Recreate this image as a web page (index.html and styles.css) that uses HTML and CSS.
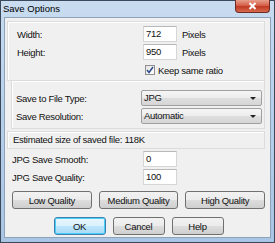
FILE: index.html
```html
<!DOCTYPE html>
<html lang="en">
<head>
  <meta charset="UTF-8" />
  <title>Save Options</title>
  <link rel="stylesheet" href="styles.css">
</head>
<body>
  <div class="window">
    <div class="titlebar">
      <span class="title">Save Options</span>
      <div class="close">
        <svg width="9" height="8" viewBox="0 0 9 8"><path d="M1.5 1 L7.5 7 M7.5 1 L1.5 7" stroke="#fff" stroke-width="2"/></svg>
      </div>
    </div>
    <div class="client">
      <div class="group size">
        <div class="row">
          <span class="label">Width:</span>
          <div class="field">712</div>
          <span class="unit">Pixels</span>
        </div>
        <div class="row">
          <span class="label">Height:</span>
          <div class="field">950</div>
          <span class="unit">Pixels</span>
        </div>
        <div class="row check-row">
          <span class="checkbox">
            <svg width="8" height="8" viewBox="0 0 8 8"><path d="M1 4 L3 6.5 L7 1" fill="none" stroke="#2c4a8a" stroke-width="1.5"/></svg>
          </span>
          <span>Keep same ratio</span>
        </div>
      </div>
      <div class="group types">
        <div class="row">
          <span class="label">Save to File Type:</span>
          <div class="select">JPG<span class="arrow"></span></div>
        </div>
        <div class="row">
          <span class="label">Save Resolution:</span>
          <div class="select">Automatic<span class="arrow"></span></div>
        </div>
      </div>
      <div class="group estimate">Estimated size of saved file: 118K</div>
      <div class="group jpg">
        <div class="row">
          <span class="label">JPG Save Smooth:</span>
          <div class="field">0</div>
        </div>
        <div class="row">
          <span class="label">JPG Save Quality:</span>
          <div class="field">100</div>
        </div>
        <div class="presets">
          <button class="btn preset">Low Quality</button>
          <button class="btn preset">Medium Quality</button>
          <button class="btn preset">High Quality</button>
        </div>
        <div class="actions">
          <button class="btn action default">OK</button>
          <button class="btn action">Cancel</button>
          <button class="btn action">Help</button>
        </div>
      </div>
    </div>
  </div>
</body>
</html>
```

FILE: styles.css
```css
body {
  margin: 0;
  font-family: "Liberation Sans", Arial, sans-serif;
  font-size: 9.5px;
  letter-spacing: -0.3px;
  color: #111;
}

/* Window frame */
.window {
  width: 275px;
  height: 243px;
  box-sizing: border-box;
  border: 1px solid #3a4a5c;
  background: linear-gradient(180deg, #c9dcf0 0%, #b9d1ea 40%, #a9c5e3 100%);
  display: flex;
  flex-direction: column;
}

.titlebar {
  height: 16px;
  display: flex;
  align-items: flex-start;
  justify-content: space-between;
  padding-left: 2px;
  flex-shrink: 0;
}

.title {
  font-size: 9.5px;
  letter-spacing: 0;
  line-height: 16px;
  color: #000;
}

.close {
  width: 33px;
  height: 12px;
  margin-right: 4px;
  margin-top: -1px;
  border: 1px solid #6e2a24;
  border-top: none;
  border-radius: 0 0 4px 4px;
  background: linear-gradient(180deg, #e8a08c 0%, #d5604a 45%, #c03a22 55%, #d66a4e 100%);
  display: flex;
  align-items: center;
  justify-content: center;
}

.client {
  flex: 1;
  margin: 0 3px 4px;
  background: #f0f0f0;
  border: 1px solid #8da3bc;
  padding: 3px 5px 0 2px;
  display: flex;
  flex-direction: column;
}

/* Group boxes */
.group {
  border: 1px solid #dcdcdc;
  box-shadow: inset 1px 1px 0 #fff;
}

.size {
  padding: 3px 0 2px 9px;
  height: 53px;
}

.types {
  margin-left: 4px;
  border-top: none;
  padding: 8px 0 3px 4px;
}

.estimate {
  margin-top: 2px;
  height: 16px;
  line-height: 16px;
  padding-left: 5px;
}

.jpg {
  border: none;
  box-shadow: none;
  padding: 1px 0 0 5px;
}

.row {
  display: flex;
  align-items: center;
  height: 18px;
}

.label {
  flex-shrink: 0;
}

.size .label {
  width: 126px;
}

.types .label {
  width: 125px;
}

.jpg .label {
  width: 131px;
}

.field {
  flex-shrink: 0;
  width: 30px;
  height: 14px;
  line-height: 14px;
  padding-left: 2px;
  background: #fff;
  border: 1px solid #d6d6d6;
  border-top-color: #b8b8b8;
}

.unit {
  margin-left: 5px;
}

.check-row {
  padding-left: 128px;
  gap: 3px;
}

.checkbox {
  width: 8px;
  height: 8px;
  border: 1px solid #8f8f8f;
  background: linear-gradient(135deg, #e4e4e4, #fff);
  display: flex;
  align-items: center;
  justify-content: center;
}

.select {
  flex-shrink: 0;
  width: 117px;
  height: 14px;
  line-height: 14px;
  padding-left: 2px;
  border: 1px solid #a0a0a0;
  border-radius: 2px;
  background: linear-gradient(180deg, #f6f6f6 0%, #ececec 50%, #dedede 51%, #d6d6d6 100%);
  position: relative;
}

.arrow {
  position: absolute;
  right: 5px;
  top: 6px;
  border-left: 3px solid transparent;
  border-right: 3px solid transparent;
  border-top: 3px solid #222;
}

/* Buttons */
.btn {
  font: inherit;
  letter-spacing: inherit;
  color: #111;
  border: 1px solid #707070;
  border-radius: 3px;
  background: linear-gradient(180deg, #f2f2f2 0%, #ebebeb 50%, #dddddd 51%, #cfcfcf 100%);
  padding: 0;
  height: 18px;
}

.presets {
  display: flex;
  gap: 7px;
  margin-top: 5px;
}

.preset {
  width: 80px;
}

.actions {
  display: flex;
  justify-content: center;
  gap: 7px;
  margin-top: 8px;
}

.action {
  width: 52px;
}

.default {
  border-color: #3c7fb1;
  box-shadow: inset 0 0 0 1px #48d0f7;
  background: linear-gradient(180deg, #eaf6fd 0%, #d9f0fc 50%, #bee6fd 51%, #a7d9f5 100%);
}
```
